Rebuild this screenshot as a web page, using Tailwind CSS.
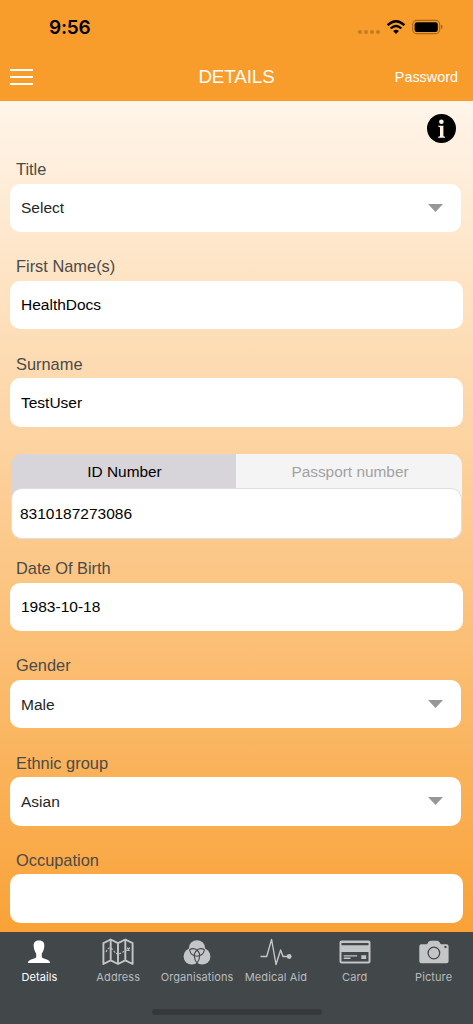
<!DOCTYPE html>
<html lang="en">
<head>
<meta charset="utf-8">
<title>Details</title>
<script src="https://cdn.jsdelivr.net/npm/@tailwindcss/browser@4"></script>
</head>
<body class="w-[473px] h-[1024px] overflow-hidden flex flex-col font-['Liberation_Sans',Arial,sans-serif] text-[15.5px] text-black bg-[#42474a]">
<header class="h-[101px] shrink-0 bg-[#f89d2c] flex flex-col">
  <div class="h-[54px] flex items-center justify-between pl-[49px] pr-[30px]">
    <span class="font-['Inter',sans-serif] font-semibold text-[19px] leading-none tracking-[-0.2px]">9:56</span>
    <svg class="w-[86px] h-[20px]" viewBox="357 17 86 20">
      <g fill="#c67d22"><circle cx="360" cy="32" r="2.1"/><circle cx="366" cy="32" r="2.1"/><circle cx="372" cy="32" r="2.1"/><circle cx="378" cy="32" r="2.1"/></g>
      <g fill="none" stroke="#000" stroke-width="2.4"><path d="M387.6 25.2Q396 17.2 404.4 25.2"/><path d="M390.7 28.5Q396 23.4 401.3 28.5"/></g>
      <path d="M393.1 31Q396 28.6 398.9 31L396 34Z"/>
      <rect x="412.7" y="20.4" width="27" height="13.2" rx="3.9" fill="none" stroke="#a4691e" stroke-width="1.1"/>
      <rect x="414.6" y="22.2" width="23.2" height="9.7" rx="2.2"/>
      <path d="M441 24.8Q442.7 25.4 442.7 27Q442.7 28.6 441 29.2Z" fill="#a4691e"/>
    </svg>
  </div>
  <div class="h-[46px] grid grid-cols-[1fr_auto_1fr] items-center px-[10px] text-white">
    <div class="flex flex-col gap-[5px] w-[23px]"><i class="block h-[2px] bg-white"></i><i class="block h-[2px] bg-white"></i><i class="block h-[2px] bg-white"></i></div>
    <h1 class="text-[18.8px] leading-none tracking-[-0.1px]">DETAILS</h1>
    <span class="justify-self-end mr-[5px] text-[14.4px] leading-none">Password</span>
  </div>
</header>
<main class="h-[831px] shrink-0 bg-[linear-gradient(to_bottom,#fff5ea,#f9a237)] pl-[10px] pr-[10px] flex flex-col">
  <div class="h-[55px] flex justify-end pt-[13px] pr-[7px]">
    <svg class="w-[29px] h-[29px]" viewBox="0 0 29 29"><circle cx="14.5" cy="14.5" r="14.5"/><g fill="#fff3e5"><circle cx="14.4" cy="7.7" r="2.3"/><path d="M11.3 11.8H16.4V22.2L18 22.7V23.7H11.2V22.7L13 22.2V13.2L11.3 12.8Z"/></g></svg>
  </div>
  <section class="h-[97.3px] shrink-0">
    <label class="block h-[27.5px] pl-[6px] pt-[4px] text-[16.4px] leading-[18px] text-[#4b4a49]">Title</label>
    <div class="h-[48.5px] w-[451px] rounded-[10px] bg-white flex items-center justify-between pl-[11px] pr-[18px] text-[#262626]"><span>Select</span><svg class="w-[15px] h-[8px]" viewBox="0 0 15 8"><path d="M0 0H15L7.5 8Z" fill="#979797"/></svg></div>
  </section>
  <section class="h-[97.3px] shrink-0">
    <label class="block h-[27.5px] pl-[6px] pt-[4px] text-[16.4px] leading-[18px] text-[#4b4a49]">First Name(s)</label>
    <div class="h-[48.5px] rounded-[10px] bg-white flex items-center pl-[11px]">HealthDocs</div>
  </section>
  <section class="h-[97.3px] shrink-0">
    <label class="block h-[27.5px] pl-[6px] pt-[4px] text-[16.4px] leading-[18px] text-[#4b4a49]">Surname</label>
    <div class="h-[48.5px] rounded-[10px] bg-white flex items-center pl-[11px]">TestUser</div>
  </section>
  <section class="h-[107.2px] shrink-0 pt-[6.5px] pl-px">
    <div class="h-[85px] w-[451px] rounded-[11px] bg-linear-to-r from-[#d7d5da] from-50% to-[#f4f4f4] to-50% flex flex-col">
      <div class="h-[34px] flex items-center text-center text-[15.4px]"><span class="w-[227px]">ID Number</span><span class="w-[224px] text-[#a2a2a2]">Passport number</span></div>
      <div class="h-[51px] rounded-[11px] border border-[#dfdee1] bg-white flex items-center pl-[8px]">8310187273086</div>
    </div>
  </section>
  <section class="h-[97.3px] shrink-0">
    <label class="block h-[27.5px] pl-[6px] pt-[4px] text-[16.4px] leading-[18px] text-[#4b4a49]">Date Of Birth</label>
    <div class="h-[48.5px] rounded-[10px] bg-white flex items-center pl-[11px]">1983-10-18</div>
  </section>
  <section class="h-[97.3px] shrink-0">
    <label class="block h-[27.5px] pl-[6px] pt-[4px] text-[16.4px] leading-[18px] text-[#4b4a49]">Gender</label>
    <div class="h-[48.5px] w-[451px] rounded-[10px] bg-white flex items-center justify-between pl-[11px] pr-[18px] text-[#262626]"><span>Male</span><svg class="w-[15px] h-[8px]" viewBox="0 0 15 8"><path d="M0 0H15L7.5 8Z" fill="#979797"/></svg></div>
  </section>
  <section class="h-[97.3px] shrink-0">
    <label class="block h-[27.5px] pl-[6px] pt-[4px] text-[16.4px] leading-[18px] text-[#4b4a49]">Ethnic group</label>
    <div class="h-[48.5px] w-[451px] rounded-[10px] bg-white flex items-center justify-between pl-[11px] pr-[18px] text-[#262626]"><span>Asian</span><svg class="w-[15px] h-[8px]" viewBox="0 0 15 8"><path d="M0 0H15L7.5 8Z" fill="#979797"/></svg></div>
  </section>
  <section class="shrink-0">
    <label class="block h-[27.5px] pl-[6px] pt-[4px] text-[16.4px] leading-[18px] text-[#4b4a49]">Occupation</label>
    <div class="h-[48.5px] rounded-[10px] bg-white"></div>
  </section>
</main>
<footer class="h-[92px] shrink-0 bg-[#42474a] border-t border-[#4b4640] flex flex-col items-center justify-between pb-[9px] font-['Inter',sans-serif] text-[11px] text-[#b9bbbc]">
  <nav class="w-full grid grid-cols-6 text-center leading-none tracking-[0.1px] whitespace-nowrap">
    <div class="flex flex-col items-center gap-[5px] pt-[2px] text-white"><svg class="w-[34px] h-[32px]" viewBox="0 0 34 32"><path fill="#fff" d="M17 5.6C20.5 5.6 22.5 7.4 22.3 11C22.2 14.7 20.8 17 19.8 18.6V22.3C20.5 24.2 27.5 23.8 28.2 28H5.8C6.5 23.8 13.5 24.2 14.2 22.3V18.6C13.2 17 11.8 14.7 11.7 11C11.5 7.4 13.5 5.6 17 5.6Z"/></svg><span>Details</span></div>
    <div class="flex flex-col items-center gap-[5px] pt-[2px]"><svg class="w-[34px] h-[32px]" viewBox="0 0 34 32" fill="none" stroke="#c3c5c6" stroke-width="1.9" stroke-linejoin="round"><path d="M2.4 8.2L9.7 4.5L17 8.2L24.3 4.5L31.6 8.2V29L24.3 25.3L17 29L9.7 25.3L2.4 29ZM9.7 4.5V25.3M17 8.2V29M24.3 4.5V25.3"/><path stroke-width="1.1" stroke-dasharray="2.2 1.3" d="M5 17Q8 10 12 15T18 19T26 15"/><path stroke-width="1.3" d="M26 12.7L28.8 15.5M28.8 12.7L26 15.5"/></svg><span>Address</span></div>
    <div class="flex flex-col items-center gap-[5px] pt-[2px]"><svg class="w-[34px] h-[32px]" viewBox="0 0 34 32"><g fill="#c3c5c6"><circle cx="17" cy="13.4" r="8.2"/><circle cx="11.8" cy="21.4" r="8.2"/><circle cx="22.2" cy="21.4" r="8.2"/></g><g fill="none" stroke="#42474a" stroke-width="1.1"><path d="M9.6 14.5Q14 12.5 17 15.2Q20 12.5 24.4 14.5"/><path d="M9.6 14.5Q10.3 20.2 15 20.4M24.4 14.5Q23.7 20.2 19 20.4"/><path d="M17 15.2Q13.9 17.6 14.4 21.5Q14.6 25.5 17 27.8Q19.4 25.5 19.6 21.5Q20.1 17.6 17 15.2Z"/><path d="M14.4 20.4Q17 22 19.6 20.4"/></g></svg><span>Organisations</span></div>
    <div class="flex flex-col items-center gap-[5px] pt-[2px]"><svg class="w-[34px] h-[32px]" viewBox="0 0 34 32"><path d="M1.5 21.5H7.7L12.6 4.5L17 29.5L21.6 15L24 21.5H29" fill="none" stroke="#c3c5c6" stroke-width="1.4" stroke-linejoin="round"/><circle cx="30.2" cy="21.5" r="2.4" fill="#c3c5c6"/></svg><span>Medical Aid</span></div>
    <div class="flex flex-col items-center gap-[5px] pt-[2px]"><svg class="w-[34px] h-[32px]" viewBox="0 0 34 32"><rect x="1.5" y="5.5" width="31" height="23" rx="2" fill="#c3c5c6"/><path fill="#42474a" d="M3.5 8H30.5V10.2H3.5ZM3.5 17H30.5V26.5H3.5Z"/><path fill="#c3c5c6" d="M5.7 20.2H19.2V21.5H5.7ZM5.7 22.6H12.5V24H5.7ZM23.3 20.2H28.2V24H23.3Z"/></svg><span>Card</span></div>
    <div class="flex flex-col items-center gap-[5px] pt-[2px]"><svg class="w-[34px] h-[32px]" viewBox="0 0 34 32"><path fill="#c3c5c6" d="M4.3 9.2H9.5Q10.3 9.2 10.6 8.3Q11.4 5.8 13.6 5.8H20.2Q22.4 5.8 23.2 8.3Q23.5 9.2 24.3 9.2H29.6Q31.6 9.2 31.6 11.2V26.2Q31.6 28.2 29.6 28.2H4.3Q2.3 28.2 2.3 26.2V11.2Q2.3 9.2 4.3 9.2Z"/><circle cx="16.9" cy="18" r="5.8" fill="none" stroke="#42474a" stroke-width="1.3"/><rect x="27.5" y="11" width="2" height="2" fill="#42474a"/></svg><span>Picture</span></div>
  </nav>
  <div class="h-[6px] w-[170px] rounded-full bg-[#373839]"></div>
</footer>
</body>
</html>
